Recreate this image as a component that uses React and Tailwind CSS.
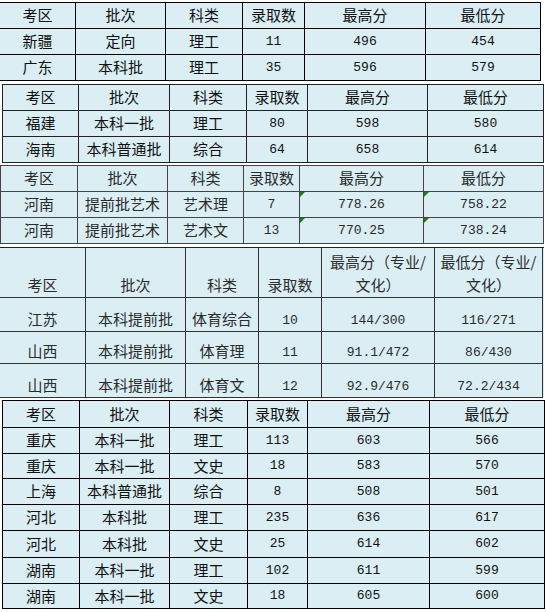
import React from 'react';

const cjk = "font-['Noto_Sans_CJK_SC',sans-serif]";
const mono = "font-['Liberation_Mono','Noto_Sans_CJK_SC',monospace]";

// 判断单元格是不是纯数字
const isNum = (v) => /^[0-9./]+$/.test(v);

function Cell({ value, flag, className = '' }) {
  return (
    <div className={`relative flex justify-center border-r border-b ${className}`}>
      {flag && (
        <span className="absolute left-0 top-0 w-0 h-0 border-t-[5px] border-r-[5px] border-t-[#1e7b1e] border-r-transparent" />
      )}
      <span className={isNum(value) ? `${mono} text-[13px]` : `${cjk} text-[15px]`}>{value}</span>
    </div>
  );
}

const head = ['考区', '批次', '科类', '录取数', '最高分', '最低分'];

function Table({ cols, rows, data, border, wrap, cell, flags = [] }) {
  return (
    <div className={`grid ${cols} ${rows} border-t ${border} ${wrap}`}>
      {data.map((row, r) =>
        row.map((v, c) => (
          <Cell
            key={`${r}-${c}`}
            value={v}
            flag={flags.some(([fr, fc]) => fr === r && fc === c)}
            className={`${border} ${cell}`}
          />
        ))
      )}
    </div>
  );
}

export default function App() {
  return (
    <div className="w-[546px] h-[612px] bg-white text-[#111] overflow-hidden">
      {/* 表1 */}
      <Table
        wrap="mt-[2px] w-[541px] bg-[#daeef3]"
        cols="grid-cols-[76px_90px_77px_62px_121px_115px]"
        rows="grid-rows-[26px_26px_26px]"
        border="border-black"
        cell="items-center"
        data={[
          head,
          ['新疆', '定向', '理工', '11', '496', '454'],
          ['广东', '本科批', '理工', '35', '596', '579'],
        ]}
      />

      {/* 表2 */}
      <Table
        wrap="mt-[3px] ml-[2px] w-[542px] bg-[#daeef3] border-l"
        cols="grid-cols-[76px_91px_77px_61px_120px_116px]"
        rows="grid-rows-[26px_26px_26px]"
        border="border-[#222]"
        cell="items-center"
        data={[
          head,
          ['福建', '本科一批', '理工', '80', '598', '580'],
          ['海南', '本科普通批', '综合', '64', '658', '614'],
        ]}
      />

      {/* 表3 */}
      <Table
        wrap="mt-[2px] w-[544px] bg-[#daeef3] text-[#2a2a2a] border-l"
        cols="grid-cols-[77px_90px_76px_56px_124px_120px]"
        rows="grid-rows-[26px_26px_26px]"
        border="border-[#444]"
        cell="items-center"
        flags={[[1, 4], [1, 5], [2, 4], [2, 5]]}
        data={[
          head,
          ['河南', '提前批艺术', '艺术理', '7', '778.26', '758.22'],
          ['河南', '提前批艺术', '艺术文', '13', '770.25', '738.24'],
        ]}
      />

      {/* 表4 */}
      <div className="mt-[3px] w-[544px] grid grid-cols-[86px_100px_73px_63px_113px_108px] grid-rows-[50px_34px_32px_34px] border-t border-[#222] bg-[#dbeef4] text-[#2b2b2b]">
        {['考区', '批次', '科类', '录取数'].map((h) => (
          <div key={h} className={`flex items-end justify-center pb-[1px] border-r border-b border-[#333] ${cjk} text-[15px]`}>{h}</div>
        ))}
        <div className={`flex items-end justify-center text-center leading-[23px] pb-[1px] border-r border-b border-[#333] ${cjk} text-[15px]`}>
          最高分（专业/<br />文化）
        </div>
        <div className={`flex items-end justify-center text-center leading-[23px] pb-[1px] border-r border-b border-[#333] ${cjk} text-[15px]`}>
          最低分（专业/<br />文化）
        </div>
        {[
          ['江苏', '本科提前批', '体育综合', '10', '144/300', '116/271'],
          ['山西', '本科提前批', '体育理', '11', '91.1/472', '86/430'],
          ['山西', '本科提前批', '体育文', '12', '92.9/476', '72.2/434'],
        ].map((row, r) =>
          row.map((v, c) => (
            <Cell key={`${r}-${c}`} value={v} className="items-end pb-[1px] border-[#333]" />
          ))
        )}
      </div>

      {/* 表5 */}
      <Table
        wrap="mt-[2px] ml-[2px] w-[543px] bg-[#daeef3] border-l"
        cols="grid-cols-[77px_90px_78px_60px_122px_115px]"
        rows="grid-rows-[27px_26px_25px_26px_26px_27px_26px_25px]"
        border="border-black"
        cell="items-center"
        data={[
          head,
          ['重庆', '本科一批', '理工', '113', '603', '566'],
          ['重庆', '本科一批', '文史', '18', '583', '570'],
          ['上海', '本科普通批', '综合', '8', '508', '501'],
          ['河北', '本科批', '理工', '235', '636', '617'],
          ['河北', '本科批', '文史', '25', '614', '602'],
          ['湖南', '本科一批', '理工', '102', '611', '599'],
          ['湖南', '本科一批', '文史', '18', '605', '600'],
        ]}
      />
    </div>
  );
}
